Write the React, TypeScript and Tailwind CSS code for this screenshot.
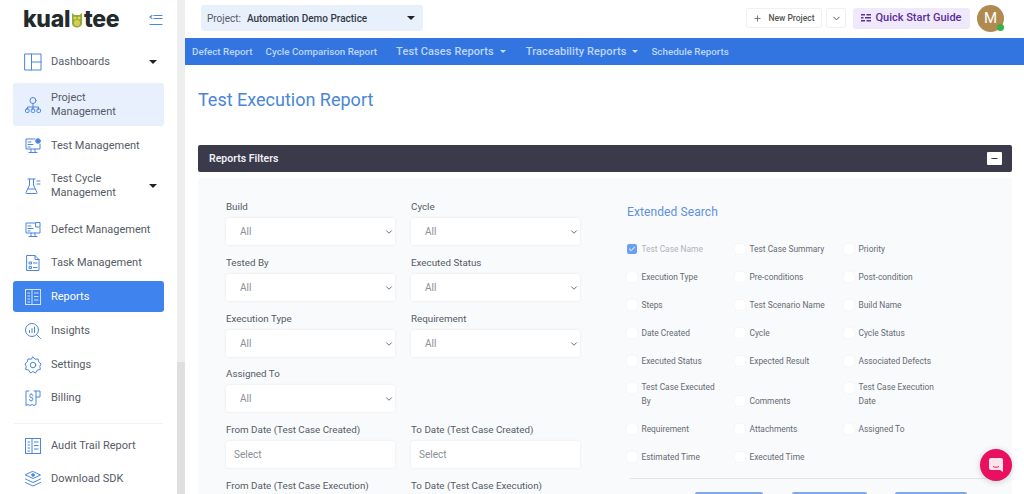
import { ChevronDown, Plus, Check, Minus } from "lucide-react";

const Ico = ({ children }: { children: React.ReactNode }) => (
  <svg viewBox="0 0 18 18" className="h-[18px] w-[18px] shrink-0" fill="none" stroke="#4a86e0" strokeWidth="1" strokeLinecap="round" strokeLinejoin="round">
    {children}
  </svg>
);

const Monitor = ({ dot }: { dot?: boolean }) => (
  <Ico>
    <path d="M11 2H2v10h14V7" />
    <path d="M7 12v3M11 12v3M5 15.5h8M4 5h3M4 7.5h5M4 10h2" />
    {dot ? <circle cx="14" cy="4" r="2.3" fill="#4a86e0" /> : <rect x="12" y="1.5" width="4" height="4.5" />}
  </Ico>
);

const ReportGrid = ({ color = "#4a86e0" }: { color?: string }) => (
  <svg viewBox="0 0 18 18" className="h-[18px] w-[18px] shrink-0" fill="none" stroke={color} strokeWidth="1">
    <rect x="1.5" y="1.5" width="15" height="15" />
    <path d="M8 1.5v15M3.5 5H6M3.5 8H6M3.5 11H6M3.5 14H6M10 5h4.5M10 8.5h4.5M10 12h4.5" />
  </svg>
);

const icons: Record<string, React.ReactNode> = {
  dash: (
    <Ico>
      <rect x="1" y="1" width="16" height="16" />
      <path d="M7.5 1v16M7.5 9H17" />
    </Ico>
  ),
  project: (
    <Ico>
      <circle cx="9" cy="4.5" r="3" />
      <path d="M9 7.5v3.5M3.5 13v-2h11v2M9 11v2" />
      <rect x="1.5" y="13" width="3.6" height="3.4" rx="1" />
      <rect x="7.2" y="13" width="3.6" height="3.4" rx="1" />
      <rect x="12.9" y="13" width="3.6" height="3.4" rx="1" />
    </Ico>
  ),
  test: <Monitor dot />,
  cycle: (
    <Ico>
      <path d="M4 2h7M5.5 2v6L2 15.5c-.3.6.1 1 .7 1h9.6c.6 0 1-.4.7-1L9.5 8V2M4 12h7M13 4h3M13 7h3" />
    </Ico>
  ),
  defect: <Monitor />,
  task: (
    <Ico>
      <path d="M3 1.5h8l4 4v11H3z" />
      <path d="M11 1.5v4h4M5.5 8h2v2h-2zM9.5 9h3.5M5.5 12.5h2v2h-2zM9.5 13.5h3.5" />
    </Ico>
  ),
  insights: (
    <Ico>
      <circle cx="8" cy="8" r="6.5" />
      <path d="M13 13l3.5 3.5M5.5 10.5V8.5M8 10.5V6.5M10.5 10.5V5" />
    </Ico>
  ),
  settings: (
    <Ico>
      <path d="M9 1l2 2.2 3-.3.7 3L17 8l-1.2 2.4.6 3-3 .6L11.5 17 9 15.5 6.5 17l-1.9-3-3-.6.6-3L1 8l2.3-2.1.7-3 3 .3z" />
      <circle cx="9" cy="9" r="2.8" />
    </Ico>
  ),
  billing: (
    <Ico>
      <path d="M5 2H2v14.5l2-1 2 1 2-1 2 1 2-1V2h-2" />
      <path d="M12 2h4v6h-4" />
      <text x="7" y="12" fontSize="9" fill="#4a86e0" stroke="none" textAnchor="middle" fontFamily="Roboto">$</text>
    </Ico>
  ),
  audit: <ReportGrid />,
  sdk: (
    <Ico>
      <path d="M9 1.5L16.5 5 9 8.5 1.5 5z" />
      <circle cx="9" cy="5" r="1.3" fill="#4a86e0" />
      <path d="M1.5 9L9 12.5 16.5 9M1.5 12.5L9 16l7.5-3.5" />
    </Ico>
  ),
};

const Caret = ({ className = "" }: { className?: string }) => (
  <span className={`h-0 w-0 border-x-[4px] border-t-[4px] border-x-transparent border-t-[#222] ${className}`} />
);

function SideItem({ icon, label, caret, className }: { icon: React.ReactNode; label: React.ReactNode; caret?: boolean; className: string }) {
  return (
    <div className={`mx-[13px] flex items-center gap-[9px] rounded-[3px] pl-[11px] pr-[7px] text-[11px] leading-[13.5px] text-[#555b66] ${className}`}>
      {icon}
      <span className="flex-1">{label}</span>
      {caret && <Caret className="border-x-[4.5px] border-t-[4.5px]" />}
    </div>
  );
}

function Sidebar() {
  return (
    <aside className="flex w-[185px] shrink-0">
      <div className="w-[177px] bg-white">
        <div className="flex h-[39px] items-center justify-between pl-[23px] pr-[14px]">
          <div className="flex items-center text-[23px] font-extrabold leading-none tracking-[-0.3px] text-[#222a2c] font-['Inter',sans-serif]">
            kual
            <svg viewBox="0 0 12 16" className="mx-[1px] h-[16px] w-[12px]">
              <path d="M1 1l2.5 2h5L11 1v10c0 3-2.5 4.5-5 4.5S1 14 1 11z" fill="#8bad3a" />
              <circle cx="4" cy="6" r="1.5" fill="#f0d24c" />
              <circle cx="8" cy="6" r="1.5" fill="#f0d24c" />
              <ellipse cx="6" cy="11" rx="3" ry="3" fill="#d9cd57" />
            </svg>
            tee
          </div>
          <svg viewBox="0 0 14 12" className="h-[12px] w-[14px]" fill="none" stroke="#4a86e0" strokeWidth="1.2" strokeLinecap="round">
            <path d="M5 1.5H13M5 4.5H13M1 10.5H13M3 1.5L1 3l2 1.5" />
          </svg>
        </div>
        <SideItem icon={icons.dash} label="Dashboards" caret className="h-[44px] pt-[1px]" />
        <SideItem icon={icons.project} label={<>Project<br />Management</>} className="h-[43px] bg-[#e8f0fd]" />
        <SideItem icon={icons.test} label="Test Management" className="h-[38px] pt-[1px]" />
        <SideItem icon={icons.cycle} label={<>Test Cycle<br />Management</>} caret className="h-[43px]" />
        <SideItem icon={icons.defect} label="Defect Management" className="mt-[5px] h-[34px] pt-[1px]" />
        <SideItem icon={icons.task} label="Task Management" className="h-[33px]" />
        <SideItem icon={<ReportGrid color="#d5e4fb" />} label={<span className="text-white">Reports</span>} className="mt-[2px] h-[31px] bg-[#3f83ee]" />
        <SideItem icon={icons.insights} label="Insights" className="mt-[2px] h-[33px]" />
        <SideItem icon={icons.settings} label="Settings" className="h-[34px] pt-[1px]" />
        <SideItem icon={icons.billing} label="Billing" className="h-[33px]" />
        <div className="mx-[14px] mb-[5px] mt-[9px] h-px bg-[#f1f2f4]" />
        <SideItem icon={icons.audit} label="Audit Trail Report" className="h-[34px]" />
        <SideItem icon={icons.sdk} label="Download SDK" className="h-[32px]" />
      </div>
      <div className="flex w-[8px] flex-col bg-[#eeeeee]">
        <div className="h-[362px]" />
        <div className="flex-1 bg-[#dfdfdf]" />
      </div>
    </aside>
  );
}

function TopBar() {
  return (
    <div className="flex h-[38px] items-center pb-[2px] pl-[16px] pr-[20px]">
      <div className="flex h-[26px] w-[222px] items-center rounded-[3px] bg-[#e8f0fc] pl-[6px] pr-[8px] text-[10px]">
        <span className="text-[#555b66]">Project:</span>
        <span className="ml-[6px] flex-1 font-medium text-[#333a46]">Automation Demo Practice</span>
        <Caret />
      </div>
      <div className="ml-auto flex h-[20px] w-[76px] items-center justify-center gap-[6px] rounded-[2px] border border-[#f0f0f0] text-[8.5px] font-medium text-[#555]">
        <Plus className="h-[9px] w-[9px]" strokeWidth={2} />
        New Project
      </div>
      <div className="ml-[4px] flex h-[20px] w-[20px] items-center justify-center rounded-[2px] border border-[#f0f0f0]">
        <ChevronDown className="h-[11px] w-[11px] text-[#444]" strokeWidth={2} />
      </div>
      <div className="ml-[7px] flex h-[21px] w-[117px] items-center justify-center gap-[4px] rounded-[3px] bg-[#f0e9fb] text-[11px] font-medium text-[#5a2ca0]">
        <svg viewBox="0 0 10 8" className="h-[8px] w-[10px]" fill="#5a2ca0">
          <path d="M0 0h4v1.5H0zM5.5 0H10v1.5H5.5zM0 3h2.5v1.5H0zM4 3h6v1.5H4zM0 6h4v1.5H0zM5.5 6H10v1.5H5.5z" />
        </svg>
        Quick Start Guide
      </div>
      <div className="relative ml-[7px] flex h-[27px] w-[27px] items-center justify-center rounded-full bg-[#b08b4f] text-[15px] text-white">
        M
        <span className="absolute bottom-[1px] right-0 h-[7px] w-[7px] rounded-full bg-[#35b34a]" />
      </div>
    </div>
  );
}

function NavBar() {
  const caret = "h-0 w-0 border-x-[3px] border-t-[3px] border-x-transparent border-t-[#d0e1fd]";
  return (
    <nav className="flex h-[27px] items-center bg-[#3375e0] pl-[7px] font-medium leading-[14px] text-[#bdd6fb]">
      <span className="text-[9.8px]">Defect Report</span>
      <span className="ml-[13px] text-[9.8px]">Cycle Comparison Report</span>
      <span className="ml-[19px] flex items-center gap-[6px] text-[11px] tracking-[0.1px]">Test Cases Reports<span className={caret} /></span>
      <span className="ml-[20px] flex items-center gap-[6px] text-[11px] tracking-[0.1px]">Traceability Reports<span className={caret} /></span>
      <span className="ml-[13px] text-[9.8px]">Schedule Reports</span>
    </nav>
  );
}

function Field({ label, value, date, className = "" }: { label: string; value?: string; date?: boolean; className?: string }) {
  return (
    <div className={className}>
      <div className="h-[12px] text-[9.8px] leading-[12px] text-[#555b66]">{label}</div>
      <div className={`mt-[5px] flex h-[27px] items-center rounded-[3px] bg-white text-[10px] text-[#8a8f98] shadow-[0_0_3px_rgba(0,0,0,0.08)] ${date ? "pl-[8px]" : "pl-[14px] pr-[1px]"}`}>
        <span className="flex-1">{date ? "Select" : value}</span>
        {!date && <ChevronDown className="h-[10px] w-[10px] text-[#555]" strokeWidth={2} />}
      </div>
    </div>
  );
}

const checks: (string | null)[][] = [
  ["Test Case Name", "Test Case Summary", "Priority"],
  ["Execution Type", "Pre-conditions", "Post-condition"],
  ["Steps", "Test Scenario Name", "Build Name"],
  ["Date Created", "Cycle", "Cycle Status"],
  ["Executed Status", "Expected Result", "Associated Defects"],
  ["Test Case Executed By", "Comments", "Test Case Execution Date"],
  ["Requirement", "Attachments", "Assigned To"],
  ["Estimated Time", "Executed Time", null],
];

function CheckItem({ label }: { label: string }) {
  const on = label === "Test Case Name";
  return (
    <label className="flex items-start gap-[4.5px]">
      <span className={`mt-[1.5px] flex h-[10px] w-[10px] shrink-0 items-center justify-center rounded-[2px] ${on ? "bg-[#6d9ff0]" : "bg-white shadow-[0_0_1px_rgba(0,0,0,0.12)]"}`}>
        {on && <Check className="h-[8px] w-[8px] text-white" strokeWidth={3} />}
      </span>
      <span className={`max-w-[82px] text-[8.4px] leading-[13.5px] ${on ? "text-[#b0b4ba]" : "text-[#666b74]"}`}>{label}</span>
    </label>
  );
}

function Filters() {
  return (
    <div className="mt-[6px] flex h-[400px] rounded-[3px] bg-[#f9fafb]">
      <div className="w-[429px] pl-[28px] pt-[23px]">
        <div className="grid w-[354px] grid-cols-2 gap-x-[16px] gap-y-[12px]">
          <Field label="Build" value="All" />
          <Field label="Cycle" value="All" />
          <Field label="Tested By" value="All" />
          <Field label="Executed Status" value="All" />
          <Field label="Execution Type" value="All" />
          <Field label="Requirement" value="All" />
          <Field label="Assigned To" value="All" className="-mt-[1px]" />
          <span />
          <Field label="From Date (Test Case Created)" date />
          <Field label="To Date (Test Case Created)" date />
          <Field label="From Date (Test Case Execution)" date />
          <Field label="To Date (Test Case Execution)" date />
        </div>
      </div>
      <div className="flex-1 pt-[26px]">
        <h2 className="h-[16px] text-[12px] leading-[16px] tracking-[0.1px] text-[#5b90e4]">Extended Search</h2>
        <div className="mt-[22px] grid w-[320px] grid-cols-[108px_109px_1fr] grid-rows-[14px_14px_14px_14px_14px_26px_14px_14px] items-end gap-y-[14px]">
          {checks.flat().map((c, i) => (c ? <CheckItem key={i} label={c} /> : <span key={i} />))}
        </div>
        <div className="ml-[3px] mr-[12px] mt-[14px] h-px bg-[#e3e4e6]" />
        <div className="mt-[13px] flex">
          <div className="ml-[68px] h-[30px] w-[68px] rounded-[2px] bg-[#7fa9ea]" />
          <div className="ml-[29px] h-[30px] w-[75px] rounded-[2px] bg-[#7fa9ea]" />
          <div className="ml-[28px] h-[30px] w-[72px] rounded-[2px] bg-[#7fa9ea]" />
        </div>
      </div>
    </div>
  );
}

export default function App() {
  return (
    <div className="relative flex h-[494px] w-[1024px] overflow-hidden bg-white font-['Roboto',sans-serif]">
      <Sidebar />
      <main className="min-w-0 flex-1">
        <TopBar />
        <NavBar />
        <div className="pl-[13px] pr-[12px]">
          <h1 className="mb-[12px] flex h-[68px] items-center text-[18px] text-[#4a86d8]">Test Execution Report</h1>
          <div className="flex h-[27px] items-center justify-between rounded-[2px] bg-[#3a3a4a] pl-[11px] pr-[10px] text-[10.5px] font-semibold text-[#eeeef2]">
            Reports Filters
            <span className="flex h-[13px] w-[15px] items-center justify-center rounded-[1px] bg-white">
              <Minus className="h-[9px] w-[9px] text-[#3a3a4a]" strokeWidth={3} />
            </span>
          </div>
          <Filters />
        </div>
      </main>
      {/* chat launcher */}
      <div className="absolute left-[980px] top-[449px] flex h-[32px] w-[32px] items-center justify-center rounded-full bg-[#e8105f] shadow-[0_1px_6px_rgba(0,0,0,0.2)]">
        <svg viewBox="0 0 14 14" className="h-[14px] w-[14px]">
          <path d="M2 0h10a2 2 0 0 1 2 2v12l-3-2H2a2 2 0 0 1-2-2V2a2 2 0 0 1 2-2z" fill="#fbe4ec" />
          <path d="M4 8.5c1.5 1 4.5 1 6 0" stroke="#e8105f" strokeWidth="1" fill="none" />
        </svg>
      </div>
    </div>
  );
}
